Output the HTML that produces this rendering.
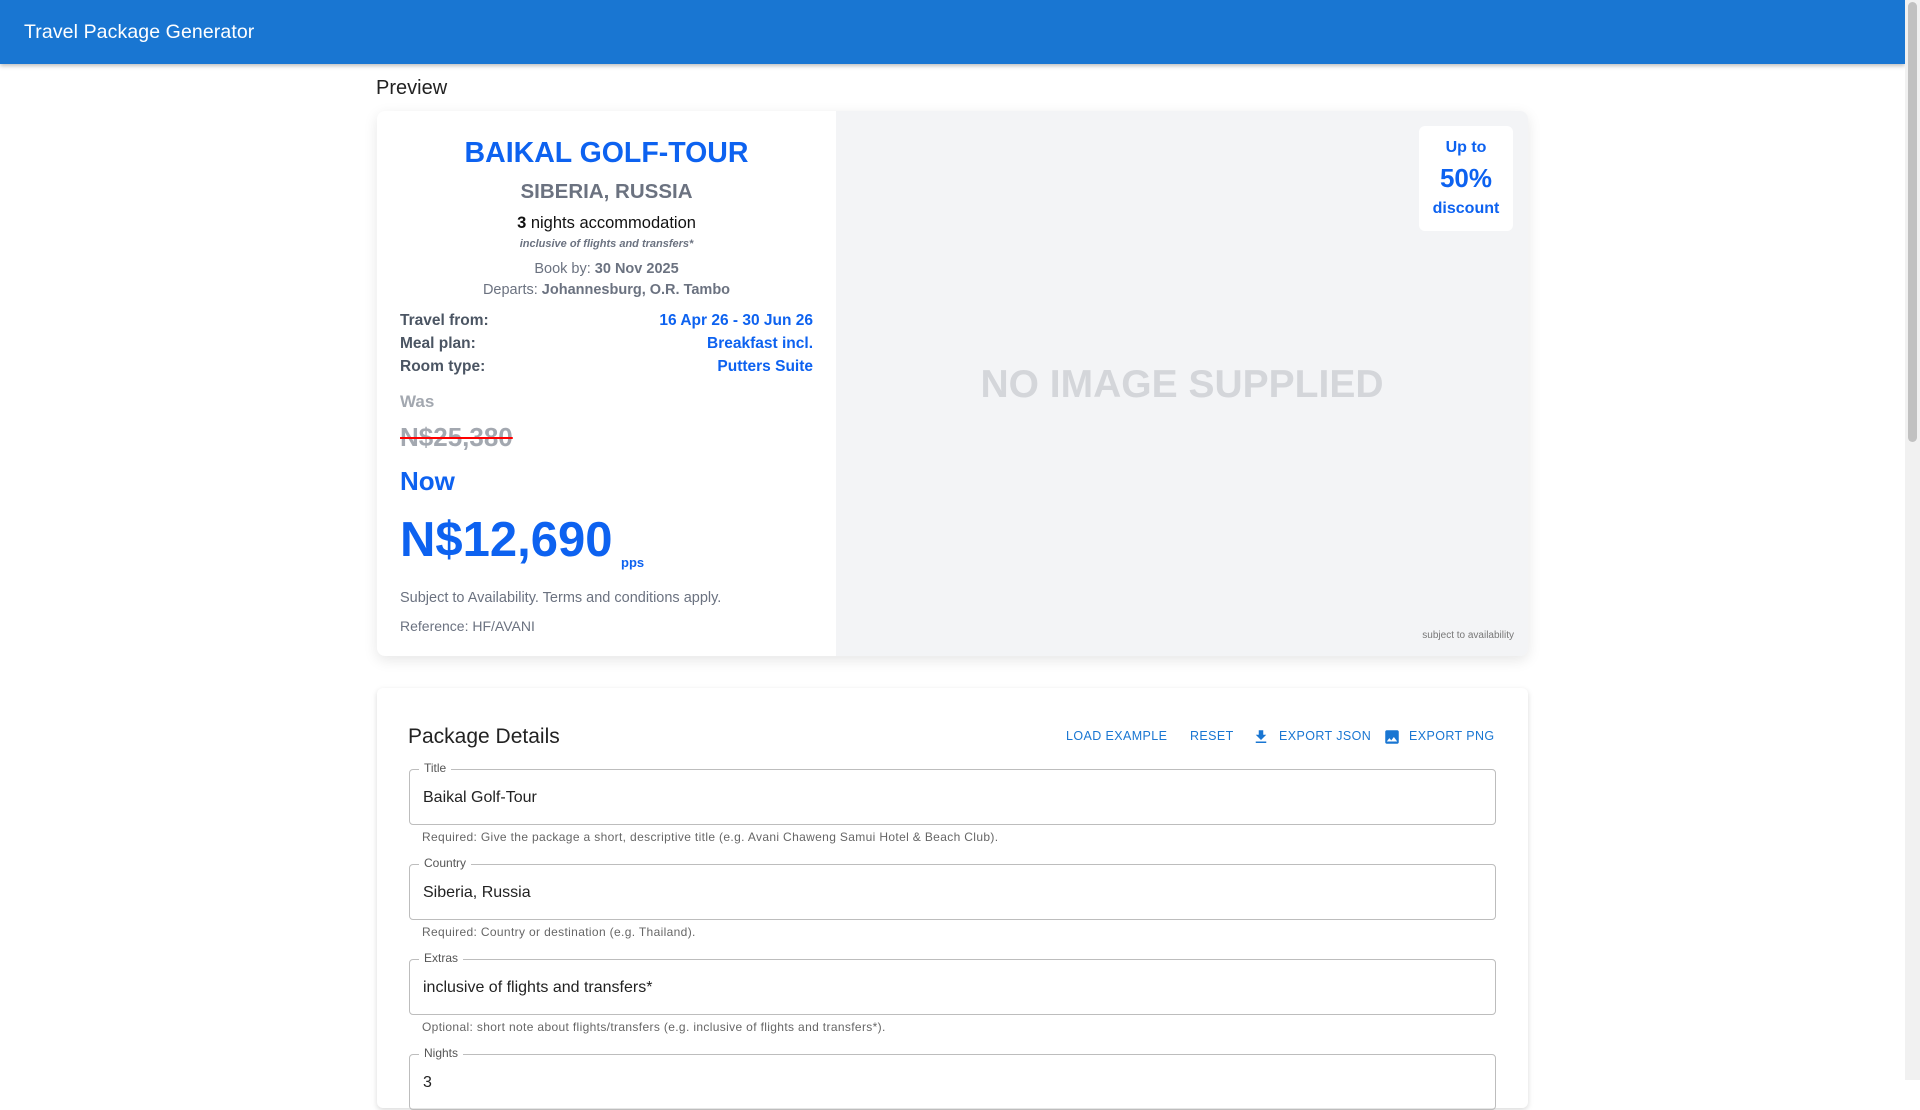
<!DOCTYPE html>
<html><head><meta charset="utf-8"><style>
*{box-sizing:border-box;margin:0;padding:0}
body{width:1920px;height:1080px;overflow:hidden;background:#fff;font-family:"Liberation Sans",Arial,sans-serif;position:relative}
.hdr{position:absolute;left:0;top:0;width:1905px;height:64px;background:#1976d2;box-shadow:0 2px 4px rgba(0,0,0,.25)}
.hdr span{position:absolute;left:24px;top:21px;color:#fff;font-size:19.5px;font-weight:500;letter-spacing:.1px}
.sb{position:absolute;right:0;top:0;width:15px;height:1080px;background:#f1f1f1}
.sb i{position:absolute;left:3px;top:2px;width:9px;height:440px;background:#c1c1c1;border-radius:5px}
.abs{position:absolute}
.c{text-align:center;left:377px;width:459px}
.card{position:absolute;left:377px;top:111px;width:1151px;height:545px;background:#fff;border-radius:8px;box-shadow:0 4px 14px rgba(0,0,0,.10);overflow:hidden}
.img{position:absolute;left:459px;top:0;right:0;bottom:0;background:#f3f4f6}
.row{position:absolute;left:400px;width:413px;font-size:15.5px;font-weight:bold;height:20px}
.row b{position:absolute;left:0;color:#4b5563}
.row em{position:absolute;right:0;color:#0d62f0;font-style:normal}
.card2{position:absolute;left:377px;top:688px;width:1151px;height:420px;background:#fff;border-radius:6px;box-shadow:0 2px 6px rgba(0,0,0,.15)}
.btn{position:absolute;top:729px;color:#1976d2;font-size:12.5px;font-weight:500;letter-spacing:.4px}
.fld{position:absolute;left:409px;width:1087px;height:56px;border:1px solid #bdbdbd;border-radius:4px}
.fld .l{position:absolute;left:9px;top:-9px;background:#fff;padding:0 5px;font-size:12px;color:#555}
.fld .v{position:absolute;left:13px;top:19px;font-size:16px;color:#222}
.help{position:absolute;left:422px;font-size:12px;color:#666;letter-spacing:.35px}
</style></head><body>
<div class="hdr"><span>Travel Package Generator</span></div>
<div class="sb"><i></i></div>
<div class="abs" style="left:376px;top:77px;font-size:20px;color:#222">Preview</div>
<div class="card"><div class="img">
<div class="abs" style="left:0;right:0;top:252px;text-align:center;font-size:39px;font-weight:bold;color:#d4d6da">NO IMAGE SUPPLIED</div>
<div class="abs" style="left:583px;top:15px;width:94px;height:105px;background:#fff;border-radius:6px;text-align:center;color:#0d62f0;font-weight:bold">
<div style="margin-top:13px;font-size:16px">Up to</div><div style="margin-top:6px;font-size:26px">50%</div><div style="margin-top:6px;font-size:16px">discount</div></div>
<div class="abs" style="right:14px;top:519px;font-size:10px;color:#777">subject to availability</div>
</div></div>
<div class="abs c" style="top:137px;font-size:28.5px;font-weight:bold;color:#0d62f0">BAIKAL GOLF-TOUR</div>
<div class="abs c" style="top:180px;font-size:20.5px;font-weight:bold;color:#6b7280">SIBERIA, RUSSIA</div>
<div class="abs c" style="top:214px;font-size:16.5px;color:#111"><b>3</b> nights accommodation</div>
<div class="abs c" style="top:238px;font-size:11px;font-style:italic;font-weight:bold;color:#6b7280">inclusive of flights and transfers*</div>
<div class="abs c" style="top:261px;font-size:14.5px;color:#6b7280">Book by: <b>30 Nov 2025</b></div>
<div class="abs c" style="top:282px;font-size:14.5px;color:#6b7280">Departs: <b>Johannesburg, O.R. Tambo</b></div>
<div class="row" style="top:312px"><b>Travel from:</b><em>16 Apr 26 - 30 Jun 26</em></div>
<div class="row" style="top:335px"><b>Meal plan:</b><em>Breakfast incl.</em></div>
<div class="row" style="top:358px"><b>Room type:</b><em>Putters Suite</em></div>
<div class="abs" style="left:400px;top:392px;font-size:17px;font-weight:bold;color:#a3a8b0">Was</div>
<div class="abs" style="left:400px;top:422px;font-size:26px;font-weight:bold;color:#a3a8b0;text-decoration:line-through;text-decoration-color:#f00;text-decoration-thickness:2px">N$25,380</div>
<div class="abs" style="left:400px;top:466px;font-size:26px;font-weight:bold;color:#0d62f0">Now</div>
<div class="abs" style="left:400px;top:512px;font-size:49px;font-weight:bold;color:#0d62f0">N$12,690</div>
<div class="abs" style="left:621px;top:555px;font-size:13px;font-weight:bold;color:#0d62f0">pps</div>
<div class="abs" style="left:400px;top:590px;font-size:14.5px;color:#6b7280">Subject to Availability. Terms and conditions apply.</div>
<div class="abs" style="left:400px;top:618px;font-size:14px;color:#6b7280">Reference: HF/AVANI</div>

<div class="card2"></div>
<div class="abs" style="left:408px;top:725px;font-size:21px;color:#222">Package Details</div>
<div class="btn" style="left:1066px">LOAD EXAMPLE</div>
<div class="btn" style="left:1190px">RESET</div>
<svg class="abs" style="left:1252px;top:728px" width="18" height="18" viewBox="0 0 24 24"><path fill="#1976d2" d="M19 9h-4V3H9v6H5l7 7 7-7zM5 18v2h14v-2H5z"/></svg>
<div class="btn" style="left:1279px">EXPORT JSON</div>
<svg class="abs" style="left:1383px;top:728px" width="18" height="18" viewBox="0 0 24 24"><path fill="#1976d2" d="M21 19V5c0-1.1-.9-2-2-2H5c-1.1 0-2 .9-2 2v14c0 1.1.9 2 2 2h14c1.1 0 2-.9 2-2zM8.5 13.5l2.5 3 3.5-4.5 4.5 6H5l3.5-4.5z"/></svg>
<div class="btn" style="left:1409px">EXPORT PNG</div>

<div class="fld" style="top:769px"><span class="l">Title</span><span class="v">Baikal Golf-Tour</span></div>
<div class="help" style="top:830px">Required: Give the package a short, descriptive title (e.g. Avani Chaweng Samui Hotel &amp; Beach Club).</div>
<div class="fld" style="top:864px"><span class="l">Country</span><span class="v">Siberia, Russia</span></div>
<div class="help" style="top:925px">Required: Country or destination (e.g. Thailand).</div>
<div class="fld" style="top:959px"><span class="l">Extras</span><span class="v">inclusive of flights and transfers*</span></div>
<div class="help" style="top:1020px">Optional: short note about flights/transfers (e.g. inclusive of flights and transfers*).</div>
<div class="fld" style="top:1054px"><span class="l">Nights</span><span class="v">3</span></div>
</body></html>
